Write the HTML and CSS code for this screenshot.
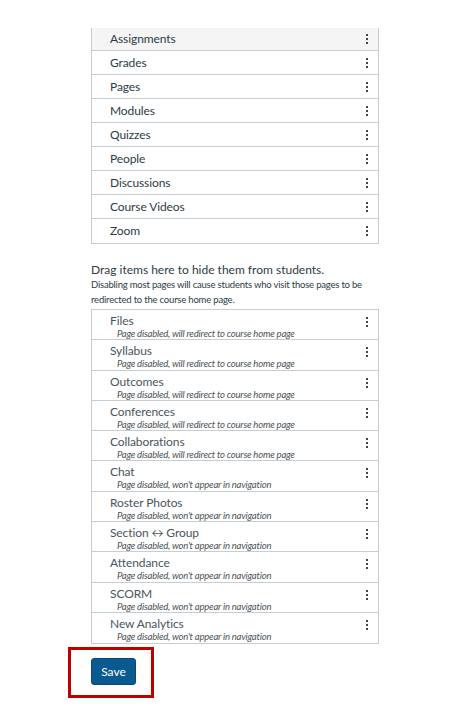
FILE: index.html
```html
<!DOCTYPE html>
<html>
<head>
<meta charset="utf-8">
<link rel="stylesheet" href="styles.css">
</head>
<body>
<div class="page">
  <ul class="nav-list enabled">
    <li class="item hover"><span class="title">Assignments</span><span class="kebab"><i></i><i></i><i></i></span></li>
    <li class="item"><span class="title">Grades</span><span class="kebab"><i></i><i></i><i></i></span></li>
    <li class="item"><span class="title">Pages</span><span class="kebab"><i></i><i></i><i></i></span></li>
    <li class="item"><span class="title">Modules</span><span class="kebab"><i></i><i></i><i></i></span></li>
    <li class="item"><span class="title">Quizzes</span><span class="kebab"><i></i><i></i><i></i></span></li>
    <li class="item"><span class="title">People</span><span class="kebab"><i></i><i></i><i></i></span></li>
    <li class="item"><span class="title">Discussions</span><span class="kebab"><i></i><i></i><i></i></span></li>
    <li class="item"><span class="title">Course Videos</span><span class="kebab"><i></i><i></i><i></i></span></li>
    <li class="item"><span class="title">Zoom</span><span class="kebab"><i></i><i></i><i></i></span></li>
  </ul>

  <div class="hint">
    <p class="hint-main">Drag items here to hide them from students.</p>
    <p class="hint-sub">Disabling most pages will cause students who visit those pages to be redirected to the course home page.</p>
  </div>

  <ul class="nav-list disabled">
    <li class="item"><div class="text"><span class="title">Files</span><span class="note">Page disabled, will redirect to course home page</span></div><span class="kebab"><i></i><i></i><i></i></span></li>
    <li class="item"><div class="text"><span class="title">Syllabus</span><span class="note">Page disabled, will redirect to course home page</span></div><span class="kebab"><i></i><i></i><i></i></span></li>
    <li class="item"><div class="text"><span class="title">Outcomes</span><span class="note">Page disabled, will redirect to course home page</span></div><span class="kebab"><i></i><i></i><i></i></span></li>
    <li class="item"><div class="text"><span class="title">Conferences</span><span class="note">Page disabled, will redirect to course home page</span></div><span class="kebab"><i></i><i></i><i></i></span></li>
    <li class="item"><div class="text"><span class="title">Collaborations</span><span class="note">Page disabled, will redirect to course home page</span></div><span class="kebab"><i></i><i></i><i></i></span></li>
    <li class="item"><div class="text"><span class="title">Chat</span><span class="note">Page disabled, won't appear in navigation</span></div><span class="kebab"><i></i><i></i><i></i></span></li>
    <li class="item"><div class="text"><span class="title">Roster Photos</span><span class="note">Page disabled, won't appear in navigation</span></div><span class="kebab"><i></i><i></i><i></i></span></li>
    <li class="item"><div class="text"><span class="title">Section ↔ Group</span><span class="note">Page disabled, won't appear in navigation</span></div><span class="kebab"><i></i><i></i><i></i></span></li>
    <li class="item"><div class="text"><span class="title">Attendance</span><span class="note">Page disabled, won't appear in navigation</span></div><span class="kebab"><i></i><i></i><i></i></span></li>
    <li class="item"><div class="text"><span class="title">SCORM</span><span class="note">Page disabled, won't appear in navigation</span></div><span class="kebab"><i></i><i></i><i></i></span></li>
    <li class="item"><div class="text"><span class="title">New Analytics</span><span class="note">Page disabled, won't appear in navigation</span></div><span class="kebab"><i></i><i></i><i></i></span></li>
  </ul>

  <div class="save-wrap">
    <div class="highlight"><button class="save">Save</button></div>
  </div>
</div>
</body>
</html>
```

FILE: styles.css
```css
* { box-sizing: border-box; }
html, body { margin: 0; padding: 0; background: #fff; }
body { font-family: Lato, "Open Sans", sans-serif; color: #2d3b45; }
.page { width: 288px; margin-left: 91px; padding-top: 28px; }
.nav-list { list-style: none; margin: 0; padding: 0; border: 1px solid #c7cdd1; }
.nav-list.enabled { border-top: none; }
.item { display: flex; align-items: center; justify-content: space-between; border-bottom: 1px solid #c7cdd1; padding: 0 10px 0 18px; }
.item:last-child { border-bottom: none; }
.enabled .item { height: 24px; }
.enabled .item:first-child { height: 23px; }
.enabled .item.hover { background: #f5f5f5; }
.title { font-size: 12px; line-height: 14px; color: #2d3b45; letter-spacing: -0.1px; }
.disabled .item { height: 30.3px; align-items: flex-start; padding-top: 4px; }
.disabled .title { color: #4a555d; display: block; }
.text { display: flex; flex-direction: column; }
.note { font-size: 9.5px; font-style: italic; color: #4b5257; line-height: 11px; padding-left: 7px; letter-spacing: -0.2px; }
.kebab { display: flex; flex-direction: column; gap: 2px; width: 2px; }
.kebab i { display: block; width: 2px; height: 2px; background: #3a4650; }
.disabled .kebab { margin-top: 3px; }
.hint { padding-top: 19px; padding-bottom: 2px; }
.hint p { margin: 0; }
.hint-main { font-size: 12px; line-height: 14px; color: #2d3b45; }
.hint-sub { font-size: 9.5px; line-height: 15px; color: #2d3b45; letter-spacing: -0.2px; }
.save-wrap { margin-left: -23px; padding-top: 3px; }
.highlight { display: inline-block; border: 3px solid #c00000; padding: 8px 15px 10px 20px; width: 86px; height: 51px; }
.save { display: block; width: 45px; height: 27px; background: #0a5a91; color: #fff; border: 1px solid #084a78; border-radius: 3px; font-family: Lato, sans-serif; font-size: 12px; padding: 0; }
```
